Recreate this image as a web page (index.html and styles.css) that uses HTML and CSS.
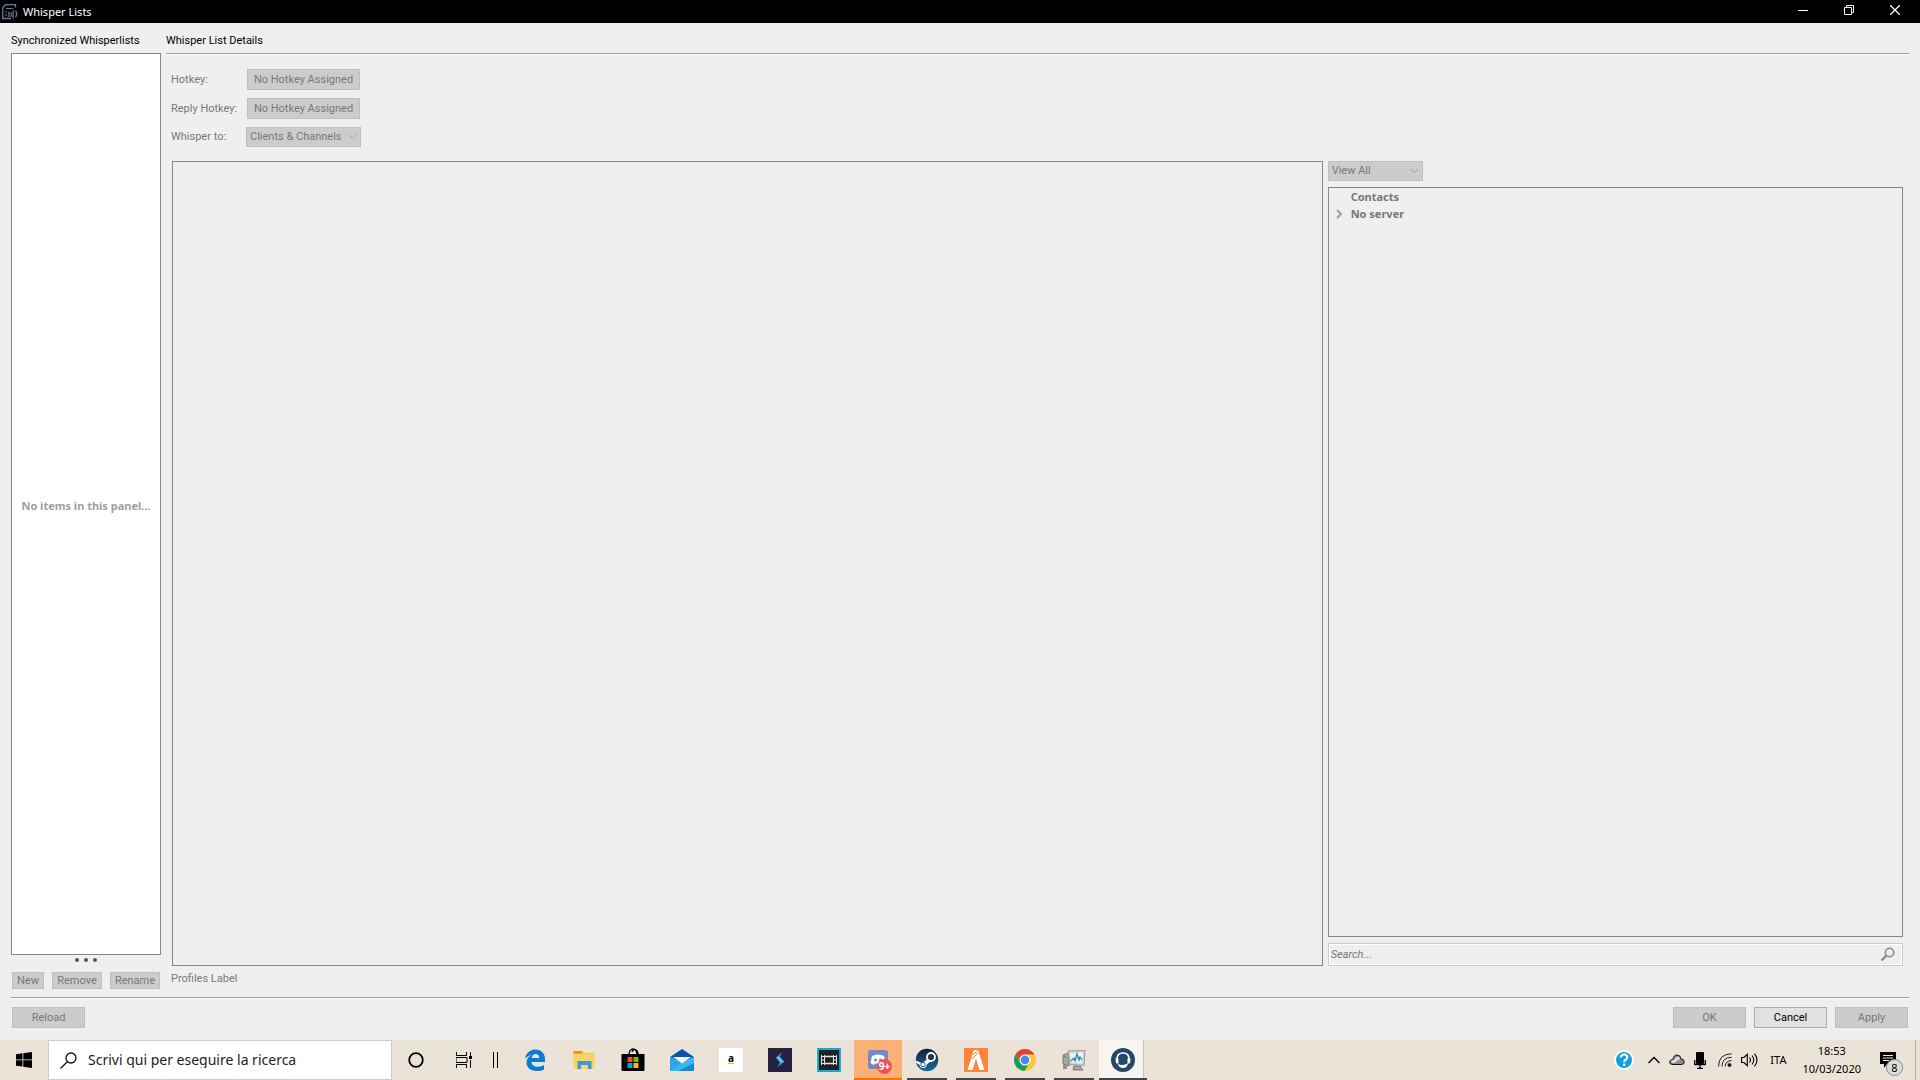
FILE: index.html
```html
<!DOCTYPE html>
<html lang="it">
<head>
    <meta charset="UTF-8">
    <meta name="viewport" content="width=device-width, initial-scale=1.0">
    <title>Whisper Lists</title>
    <link rel="stylesheet" href="styles.css">
</head>
<body>
    <header class="titlebar">
        <svg class="app-icon" viewBox="0 0 16 16" width="16" height="16">
            <path d="M13.500 3.500V.7H3.500L.8 3.500V14.500H9" fill="none" stroke="#5f7f9e" stroke-width="1.300"/>
            <path d="M4 4.500h7M3 8h2M3 11h2" stroke="#5f7f9e"/>
            <path d="M6 8v5h2V7.500zM8.500 8h1.500l2-3v11l-2-3H8.500z" fill="#4b4f52"/>
            <path d="M13.500 7q2.500 3 0 6" fill="none" stroke="#55779a" stroke-width="1.500"/>
        </svg>
        <h1>Whisper Lists</h1>
        <div class="window-buttons">
            <button type="button" aria-label="Minimize"><svg width="10" height="10"><path d="M0 5.500h10" stroke="#fff"/></svg></button>
            <button type="button" aria-label="Restore"><svg width="10" height="10"><path d="M.5 2.500h7v7h-7zM2.500 2V.5h7v7H8" fill="none" stroke="#fff"/></svg></button>
            <button type="button" aria-label="Close"><svg width="10" height="10"><path d="M0 0l10 10M10 0L0 10" stroke="#fff" stroke-width="1.300"/></svg></button>
        </div>
    </header>

    <main class="dialog">
        <div class="columns">
            <section class="lists">
                <h2>Synchronized Whisperlists</h2>
                <div class="list-box">No items in this panel...</div>
                <div class="dots"><i></i><i></i><i></i></div>
                <div class="list-buttons">
                    <button type="button" class="btn btn-new" disabled>New</button>
                    <button type="button" class="btn" disabled>Remove</button>
                    <button type="button" class="btn" disabled>Rename</button>
                </div>
            </section>

            <section class="details">
                <h2>Whisper List Details</h2>
                <div class="details-body">
                    <form class="fields">
                        <label for="hotkey">Hotkey:</label>
                        <button type="button" class="btn" id="hotkey" disabled>No Hotkey Assigned</button>
                        <label for="replyHotkey">Reply Hotkey:</label>
                        <button type="button" class="btn" id="replyHotkey" disabled>No Hotkey Assigned</button>
                        <label for="whisperTo">Whisper to:</label>
                        <div class="select">
                            <select id="whisperTo" disabled><option>Clients &amp; Channels</option></select>
                            <svg width="9" height="6"><path d="M1 1l3.500 3.500L8 1" fill="none" stroke="#a0a0a0"/></svg>
                        </div>
                    </form>
                    <div class="panes">
                        <div class="targets"></div>
                        <div class="browser">
                            <div class="select view-select">
                                <select aria-label="View" disabled><option>View All</option></select>
                                <svg width="9" height="6"><path d="M1 1l3.500 3.500L8 1" fill="none" stroke="#a0a0a0"/></svg>
                            </div>
                            <ul class="tree">
                                <li>Contacts</li>
                                <li><svg width="6" height="10"><path d="M1 1l4 4-4 4" fill="none" stroke="#a0a0a0" stroke-width="2"/></svg>No server</li>
                            </ul>
                            <div class="search">
                                <input type="text" aria-label="Search" placeholder="Search..." disabled>
                                <svg width="15" height="15" viewBox="0 0 15 15" fill="none" stroke="#8a8a8a"><circle cx="9.500" cy="5.500" r="4.200" stroke-width="1.600"/><path d="M6.500 8.500l-5 5" stroke-width="2.300"/></svg>
                            </div>
                        </div>
                    </div>
                    <p class="profiles">Profiles Label</p>
                </div>
            </section>
        </div>
        <footer class="actions">
            <button type="button" class="btn" disabled>Reload</button>
            <button type="button" class="btn push" disabled>OK</button>
            <button type="button" class="btn">Cancel</button>
            <button type="button" class="btn" disabled>Apply</button>
        </footer>
    </main>

    <nav class="taskbar">
        <button type="button" class="start" aria-label="Start">
            <svg width="16" height="16"><path d="M0 2.200L6.500 1.300v6.200H0zM7.300 1.200L16 0v7.500H7.300zM0 8.300h6.500v6.300L0 13.700zM7.300 8.300H16V16l-8.700-1.200z"/></svg>
        </button>
        <label class="task-search">
            <svg width="17" height="17" fill="none" stroke="#111" stroke-width="1.300"><circle cx="11" cy="6" r="5"/><path d="M7.500 9.500L.5 16.500"/></svg>
            <input type="text" placeholder="Scrivi qui per eseguire la ricerca" aria-label="Cerca">
        </label>
        <div class="system">
            <button type="button" aria-label="Cortana"><svg width="16" height="16"><circle cx="8" cy="8" r="6.800" fill="none" stroke="#000" stroke-width="1.800"/></svg></button>
            <button type="button" aria-label="Task View"><svg width="16" height="16" fill="none" stroke="#000"><path d="M.5 0v3.500h10V0M.5 16v-3.500h10V16M0 5.500h11v5H0zM14.500 0v4M14.500 8v8"/><path d="M13 5.500h3" stroke-width="3"/></svg></button>
            <svg class="grip" width="5" height="16"><path d="M.5 0v16M4.500 0v16" stroke="#000"/></svg>
        </div>
        <div class="apps">
            <button type="button" aria-label="Edge">
                <svg width="24" height="24" viewBox="0 0 24 24"><path d="M2 11C3 4 8 1.500 12.500 1.500 19 1.500 22 6 22 11v3H8.500c.3 3.500 3.500 4.700 6.500 4.700 2.200 0 4.200-.7 6-1.700v4.500c-2 1-4.500 1.500-7 1.500-7 0-10.500-4-10.500-8.500 0-3.500 2-6 5-7.500-3 .5-5 2-6.500 4zM8.700 10h7.600c0-2.600-1.500-4-3.700-4-2.400 0-3.600 1.700-3.900 4z" fill="#0b7bd8"/></svg>
            </button>
            <button type="button" aria-label="File Explorer">
                <svg width="24" height="24" viewBox="0 0 24 24"><path d="M1.500 3h9l1.500 2h10.500v16h-21z" fill="#f7c546"/><path d="M1.500 3h9l-1.500 2.500H1.500z" fill="#d69a08"/><path d="M2 6h20v15H2z" fill="#fdd365"/><path d="M5.500 21v-8h14v8H16v-4H9v4z" fill="#3b96dc"/></svg>
            </button>
            <button type="button" aria-label="Microsoft Store">
                <svg width="24" height="24" viewBox="0 0 24 24"><path d="M8 7c0-8 8-8 8 0M11 4c1-4 6-3 6 2" fill="none" stroke="#000" stroke-width="1.300"/><path d="M.5 6h23v16q0 1-1 1h-21q-1 0-1-1z"/><path d="M6.500 9h5v5h-5z" fill="#f25022"/><path d="M12.500 9h5v5h-5z" fill="#7fba00"/><path d="M6.500 15h5v5h-5z" fill="#00a4ef"/><path d="M12.500 15h5v5h-5z" fill="#ffb900"/></svg>
            </button>
            <button type="button" aria-label="Mail">
                <svg width="24" height="24" viewBox="0 0 24 24"><path d="M0 9l12-8 12 8-12 6z" fill="#0359a8"/><path d="M0 9l12 6L24 9v14H0z" fill="#24a9ea"/><path d="M24 9v14H0z" fill="#168bd2"/><path d="M12 15L24 9v6L8 23H0z" fill="#34b9f1"/><path d="M3 9h18l-9 6.500z" fill="#f2f5f9"/></svg>
            </button>
            <button type="button" aria-label="Amazon">
                <span class="amazon">a</span>
            </button>
            <button type="button" aria-label="Streamlabs">
                <svg width="24" height="24" viewBox="0 0 24 24"><path d="M0 0h24v24H0z" fill="#25213f"/><path d="M14.500 4L8 9.500l4.500 4L9 19.500l7-5.500-4.500-5z" fill="#3d9bec"/><path d="M8 9.500l3.500-1 4.500 5-3.500 1.500z" fill="#4cc3f0"/></svg>
            </button>
            <button type="button" aria-label="Movie Studio">
                <svg width="24" height="24" viewBox="0 0 24 24"><path d="M1 1h22v22H1z" fill="#202224" stroke="#11a9d6" stroke-width="1.800"/><path d="M8 8.500h8M8 15.500h8" stroke="#e4e4e4" stroke-width="1.500"/><path d="M4.500 7v10M7.500 7v10M16.500 7v10M19.500 7v10M4 8.500h4M4 12h4M4 15.500h4M16 8.500h4M16 12h4M16 15.500h4" stroke="#e4e4e4"/></svg>
            </button>
            <button type="button" class="alert" aria-label="Discord">
                <svg width="24" height="24" viewBox="0 0 24 24"><rect x="2" y="2" width="20" height="19" rx="3" fill="#7289c9"/><path d="M6 8q6-3 12 0l1.500 7-3.500 2-1-1.500H9L8 17l-3.500-2z" fill="#fff"/><circle cx="9.500" cy="12" r="1.500" fill="#7289c9"/><circle cx="14.500" cy="12" r="1.500" fill="#7289c9"/></svg>
                <span class="badge">9+</span>
            </button>
            <button type="button" class="open" aria-label="Steam">
                <svg width="24" height="24" viewBox="0 0 24 24"><defs><linearGradient id="steam" x2="0" y2="1"><stop stop-color="#111d37"/><stop offset="1" stop-color="#1470a5"/></linearGradient></defs><circle cx="12" cy="12" r="11.200" fill="url(#steam)"/><path d="M.8 12.500l6 2.500 4-2.500 2-3.500 4 3.500-5 4q-1 4-4 3.500-3-.5-3.500-3.500L1.500 15z" fill="#fff"/><circle cx="16" cy="9" r="4" fill="#203651" stroke="#fff" stroke-width="1.800"/><circle cx="8" cy="16.500" r="2.200" fill="none" stroke="#22547a"/></svg>
            </button>
            <button type="button" class="open" aria-label="FiveM">
                <svg width="24" height="24" viewBox="0 0 24 24"><path d="M0 0h24v24H0z" fill="#ff8339"/><path d="M10 2h4l6.500 20h-5L12 10.500 8.500 22h-5z" fill="#fff"/><path d="M9 7l4-4M8 11l6-6" stroke="#ff8339"/></svg>
            </button>
            <button type="button" class="open" aria-label="Chrome">
                <svg width="24" height="24" viewBox="0 0 24 24"><circle cx="12" cy="12" r="11" fill="#fbc934"/><path d="M2.500 6.500A11 11 0 0 1 21.500 6.500H12L7.200 14.700z" fill="#db4437"/><path d="M2.500 6.500A11 11 0 0 0 11.500 23l5-8.200-9.500 0z" fill="#139f5a"/><circle cx="12" cy="12" r="5.500" fill="#fff"/><circle cx="12" cy="12" r="4.400" fill="#4688f1"/></svg>
            </button>
            <button type="button" class="open" aria-label="Monitor">
                <svg width="24" height="24" viewBox="0 0 24 24"><path d="M1 7l6-2v13l-6-2zM12 18h6l3 4H11z" fill="#a4a6a8" stroke="#777"/><path d="M6 3l17-.5-1 15-14-1z" fill="#cfd2d3" stroke="#999"/><path d="M8 5l13-.5-.8 11-11-.8z" fill="#e7f4fa"/><path d="M9 13l3-3 1 3 2-7 2 6 1-3 2 3" fill="none" stroke="#247ca6" stroke-width="1.200"/><path d="M1 17h4v4H1z" fill="#8d8f90"/><path d="M1 9h4" stroke="#3fae4b"/></svg>
            </button>
            <button type="button" class="open current" aria-label="TeamSpeak">
                <svg width="24" height="24" viewBox="0 0 24 24"><circle cx="12" cy="12" r="12" fill="#24466a"/><path d="M6 11q0-6 6-6t6 6" fill="none" stroke="#fff" stroke-width="1.700"/><path d="M4.500 10.500h3v5h-2q-1-1-1-5zM16.500 10.500h3q0 4-1 5h-2z" fill="#fff"/><path d="M6.500 15.500q2 1.500 5 1.500 3 0 5.500-2-.5 5-5 5-4 0-5.500-4.500z" fill="#fff"/></svg>
            </button>
        </div>
        <div class="tray">
            <svg class="help" width="20" height="20" viewBox="0 0 20 20"><circle cx="10" cy="10" r="9" fill="#129fdc" stroke="#fff" stroke-width="2"/><path d="M6.800 7.500q.2-3 3.300-3t3.200 2.700q0 1.800-2 2.700-1 .6-1 2.100M10.200 13.500v2.300" fill="none" stroke="#fff" stroke-width="2.200"/></svg>
            <svg width="12" height="8"><path d="M.5 7L6 1.500 11.500 7" fill="none" stroke="#000" stroke-width="1.300"/></svg>
            <svg width="16" height="12" viewBox="0 0 16 12"><path d="M4 10.500Q.5 10.500.7 8 1 5.500 4 5.500 4.500 1 8 1q3.500 0 4 4 3 0 3.200 2.700.2 2.800-3 2.800z" fill="#8c8c8c" stroke="#111"/><path d="M2 7q1-1 3-1 2-4 5-3 1 1 1 2l-6 4H3q-1-1-1-2z" fill="#ddd"/></svg>
            <svg width="12" height="17" viewBox="0 0 12 17"><rect x="2" width="8" height="12" rx="1"/><path d="M.7 8v4.500h10.600V8M6 12v4M3 16.300h6" fill="none" stroke="#000" stroke-width="1.300"/></svg>
            <svg class="wifi" width="14" height="14" viewBox="0 0 14 14" fill="none" stroke="#222"><path d="M.6 13.500Q.6 1 13.500.8M4 13.500Q4 4.500 13.500 4.300M7.300 13.500Q7.300 8 13.500 7.600"/><circle cx="11.500" cy="12" r="1.500" fill="#000"/></svg>
            <svg width="17" height="14" viewBox="0 0 17 14" fill="none" stroke="#000" stroke-width="1.100"><path d="M.6 4.500H3L6.300 1.300v11.400L3 9.500H.6zM8.500 4.500q2 2.500 0 5M11 2.500q3.500 4.500 0 9M13.500.6q5 6.400 0 12.800"/></svg>
            <span class="lang">ITA</span>
            <time class="clock" datetime="2020-03-10T18:53"><span>18:53</span><span>10/03/2020</span></time>
            <button type="button" class="notifications" aria-label="Notifiche">
                <svg width="16" height="16" viewBox="0 0 16 16"><path d="M0 0h16v12H7l-3 4v-4H0z"/><path d="M3 3.500h10M3 6h10M3 8.500h6" stroke="#eee5d8"/></svg>
                <span class="count">8</span>
            </button>
        </div>
    </nav>
</body>
</html>
```
FILE: styles.css
```css
* {
    box-sizing: border-box;
}
body {
    margin: 0;
    height: 100vh;
    display: flex;
    flex-direction: column;
    background-color: #efefef;
    color: #000;
    font-family: Roboto, "Noto Sans", sans-serif;
    font-size: 11px;
    line-height: 16px;
    overflow: hidden;
}
h1, h2, p, ul {
    margin: 0;
    padding: 0;
    font-size: inherit;
    font-weight: normal;
}
button, input, select {
    font: inherit;
    color: inherit;
    margin: 0;
    padding: 0;
    border: 0;
    border-radius: 0;
    background: none;
}
svg {
    display: block;
    flex: none;
}

/* title bar */
.titlebar {
    display: flex;
    align-items: center;
    height: 23px;
    padding-left: 2px;
    background-color: #000;
    color: #fff;
    font-family: "Noto Sans", sans-serif;
}
.titlebar h1 {
    margin-left: 5px;
}
.window-buttons {
    display: flex;
    height: 20px;
    margin: 0 2px 3px auto;
}
.window-buttons button {
    display: flex;
    align-items: center;
    justify-content: center;
    width: 46px;
}

/* dialog */
.dialog {
    flex: 1;
    min-height: 0;
    display: flex;
    flex-direction: column;
    padding: 10px 11px 12px;
}
.columns {
    flex: 1;
    min-height: 0;
    display: flex;
    gap: 5px;
    padding-bottom: 8px;
}
.lists {
    display: flex;
    flex-direction: column;
    width: 150px;
}
h2 {
    height: 20px;
    white-space: nowrap;
}
.list-box {
    flex: 1;
    display: flex;
    align-items: center;
    justify-content: center;
    padding-top: 4px;
    border: 1px solid #828790;
    background-color: #fff;
    color: #a0a0a0;
    font-family: "Noto Sans", sans-serif;
    font-weight: bold;
    white-space: nowrap;
}
.dots {
    display: flex;
    justify-content: center;
    gap: 5px;
    padding: 3px 0 10px;
}
.dots i {
    width: 4px;
    height: 4px;
    border-radius: 2px;
    background-color: #555;
}
.list-buttons {
    display: flex;
    justify-content: space-between;
    padding: 0 1px;
}
.btn {
    height: 21px;
    border: 1px solid #adadad;
    background-color: #e1e1e1;
    line-height: 19px;
}
.btn:disabled, .select select {
    border: 1px solid #bfbfbf;
    background-color: #ccc;
    color: #787878;
}
.list-buttons .btn {
    width: 50px;
    height: 17px;
    line-height: 15px;
}
.list-buttons .btn-new {
    width: 32px;
}
.details {
    flex: 1;
    display: flex;
    flex-direction: column;
    color: #787878;
}
.details h2 {
    color: #000;
    height: 22px;
    border-bottom: 1px solid #fff;
    box-shadow: inset 0 -1px #a0a0a0;
}
.details-body {
    flex: 1;
    display: flex;
    flex-direction: column;
    padding: 14px 6px 2px 5px;
}
.fields {
    display: grid;
    grid-template-columns: 76px 113px;
    row-gap: 8px;
    align-items: center;
}
.select {
    display: flex;
    align-items: center;
    width: 115px;
    height: 20px;
    margin-left: -1px;
}
.select select {
    width: 100%;
    height: 20px;
    padding-left: 3px;
    appearance: none;
    opacity: 1;
}
.select svg {
    margin-left: -13px;
}
.panes {
    flex: 1;
    display: flex;
    gap: 5px;
    margin: 14px 0 0 1px;
}
.targets {
    flex: 1150;
    border: 1px solid #828790;
}
.browser {
    flex: 576;
    display: flex;
    flex-direction: column;
    gap: 6px;
}
.view-select {
    width: 95px;
    margin-left: 0;
}
.tree {
    flex: 1;
    border: 1px solid #828790;
    list-style: none;
    font-family: "Noto Sans", sans-serif;
    font-weight: bold;
}
.tree li {
    display: flex;
    align-items: center;
    height: 17px;
    padding-left: 22px;
}
.tree svg {
    margin: 0 9px 0 -15px;
}
.search {
    display: flex;
    align-items: center;
    height: 23px;
    padding-right: 7px;
    border: 1px solid #ccc;
    box-shadow: inset 0 0 0 1px #fff;
}
.search input {
    flex: 1;
    padding-left: 2px;
    font-style: italic;
}
.search input::placeholder {
    color: #787878;
}
.profiles {
    margin-top: 5px;
}
.actions {
    display: flex;
    gap: 8px;
    padding: 9px 1px 0;
    border-top: 1px solid #a0a0a0;
    box-shadow: inset 0 1px #fff;
}
.actions .btn {
    width: 73px;
}
.push {
    margin-left: auto;
}

/* taskbar */
.taskbar {
    display: flex;
    height: 40px;
    background-color: #ebe3d7;
    font-family: "Noto Sans", sans-serif;
}
.taskbar button {
    display: flex;
    align-items: center;
    justify-content: center;
    width: 48px;
    height: 40px;
}
.task-search {
    display: flex;
    align-items: center;
    gap: 11px;
    width: 344px;
    padding-left: 11px;
    border: 1px solid #ccc;
    background-color: #fff;
}
.task-search input {
    flex: 1;
    font-size: 14px;
}
.task-search input::placeholder {
    color: #222;
}
.system {
    display: flex;
    align-items: center;
    width: 119px;
}
.grip {
    margin-left: 5px;
}
.apps {
    display: flex;
    gap: 1px;
}
.apps button {
    position: relative;
}
.apps .open::after {
    content: "";
    position: absolute;
    left: 4px;
    right: 4px;
    bottom: 0;
    height: 2px;
    background-color: #444;
}
.apps .alert {
    background-color: #fbb075;
    border-bottom: 2px solid #ff7300;
    padding-top: 2px;
}
.badge {
    position: absolute;
    left: 23px;
    top: 19px;
    width: 15px;
    height: 15px;
    border-radius: 50%;
    background-color: #f04f55;
    color: #fff;
    font-size: 10px;
    font-weight: bold;
    line-height: 14px;
}
.amazon {
    width: 24px;
    height: 24px;
    background-color: #fff;
    font-size: 10px;
    font-weight: bold;
    line-height: 20px;
    text-decoration: underline #f7a531;
}
.apps .current {
    background-color: #f8f5f0;
    box-shadow: inset -3px 0 #ebe3d7, inset -4px 0 #c8c3bb;
}
.apps .current::after {
    left: 0;
    right: 0;
}
.tray {
    display: flex;
    align-items: center;
    gap: 9px;
    margin-left: auto;
    padding-right: 4px;
}
.help {
    margin-right: 5px;
}
.wifi {
    margin-left: 3px;
}
.lang {
    margin-left: 3px;
}
.clock {
    display: flex;
    flex-direction: column;
    align-items: center;
    margin-left: 7px;
    line-height: 18px;
}
.tray .notifications {
    position: relative;
    width: 46px;
    padding-right: 9px;
    border-right: 1px solid #b9b4ab;
}
.count {
    position: absolute;
    left: 16px;
    top: 19px;
    width: 17px;
    height: 17px;
    border: 1px solid #888;
    border-radius: 50%;
    background-color: #ddd;
    line-height: 15px;
}
```
